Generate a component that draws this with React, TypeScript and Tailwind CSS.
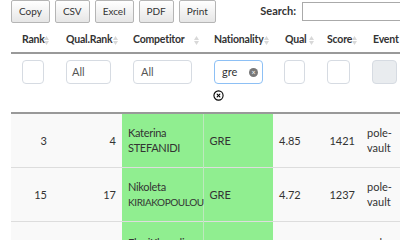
import { CircleX } from "lucide-react";

const buttons = ["Copy", "CSV", "Excel", "PDF", "Print"];

const columns = [
  { label: "Rank", w: "w-[42px]", pl: "pl-[11px]" },
  { label: "Qual.Rank", w: "w-[69px]", pl: "pl-[13px]" },
  { label: "Competitor", w: "w-[81px]", pl: "pl-[11px]" },
  { label: "Nationality", w: "w-[70px]", pl: "pl-[11px]" },
  { label: "Qual", w: "w-[45px]", pl: "pl-[12px]" },
  { label: "Score", w: "w-[43px]", pl: "pl-[9px]" },
  { label: "Event", w: "w-[100px]", pl: "pl-[12px]" },
];

const rows = [
  { rank: "3", qrank: "4", first: "Katerina", last: "STEFANIDI", nat: "GRE", qual: "4.85", score: "1421", h: "h-[54px]" },
  { rank: "15", qrank: "17", first: "Nikoleta", last: "KIRIAKOPOULOU", nat: "GRE", qual: "4.72", score: "1237", h: "h-[54px]" },
  { rank: "21", qrank: "24", first: "EleniKlaoudia", last: "POLAK", nat: "GRE", qual: "4.60", score: "1100", h: "h-[57px]" },
];

function SortArrows() {
  return (
    <span className="absolute right-[4px] top-1/2 -translate-y-1/2 flex flex-col gap-[1px] pt-[3px]">
      <svg width="5" height="4" viewBox="0 0 5 4"><path d="M2.5 0L5 4H0z" fill="#d8d8d8" /></svg>
      <svg width="5" height="4" viewBox="0 0 5 4"><path d="M0 0h5L2.5 4z" fill="#d8d8d8" /></svg>
    </span>
  );
}

export default function App() {
  return (
    <div className="w-[400px] h-[240px] overflow-hidden bg-white text-[#333] font-['Lato','Liberation_Sans',sans-serif]">
      <div className="flex items-start h-[25px] pl-[11px]">
        <div className="flex gap-[5px]">
          {buttons.map((b) => (
            <button
              key={b}
              className="h-[23px] px-[7px] text-[10px] border border-[#b5b5b5] rounded-[2px] bg-gradient-to-b from-white to-[#e6e6e6] text-[#333]"
            >
              {b}
            </button>
          ))}
        </div>
        <div className="ml-auto flex items-center gap-[6px] pt-[2px]">
          <span className="text-[11px] font-bold">Search:</span>
          <input className="w-[100px] h-[19px] border border-[#aaa] -mr-[2px]" />
        </div>
      </div>

      <div className="pl-[11px]">
        <table className="table-fixed border-collapse text-[11px] w-[450px]">
          <colgroup>
            {columns.map((c) => (
              <col key={c.label} className={c.w} />
            ))}
          </colgroup>
          <thead>
            <tr className="h-[28px] border-b-2 border-[#999]">
              {columns.map((c) => (
                <th key={c.label} className={`relative text-left font-bold text-[10.5px] tracking-[-0.2px] pt-[3px] whitespace-nowrap ${c.pl}`}>
                  {c.label}
                  {c.label !== "Event" && <SortArrows />}
                </th>
              ))}
            </tr>
            <tr className="h-[60px] border-b-2 border-[#999] align-top">
              <td className="pl-[11px] pt-[6px]">
                <div className="w-[22px] h-[24px] border border-[#d6dbe2] rounded-[4px]" />
              </td>
              <td className="pl-[13px] pt-[6px]">
                <div className="w-[45px] h-[24px] border border-[#d6dbe2] rounded-[4px] pl-[5px] flex items-center text-[#555]">All</div>
              </td>
              <td className="pl-[11px] pt-[6px]">
                <div className="w-[59px] h-[24px] border border-[#d6dbe2] rounded-[4px] pl-[7px] flex items-center text-[#555]">All</div>
              </td>
              <td className="pl-[11px] pt-[6px]">
                <div className="w-[49px] h-[24px] border border-[#8dc0f5] rounded-[4px] pl-[7px] pr-[4px] flex items-center justify-between text-[#333]">
                  gre
                  <span className="w-[9px] h-[9px] rounded-full bg-[#777] flex items-center justify-center text-white text-[7px] leading-none">×</span>
                </div>
                <CircleX size={11} strokeWidth={2.4} className="mt-[6px] ml-[-1px] text-black" />
              </td>
              <td className="pl-[11px] pt-[6px]">
                <div className="w-[21px] h-[24px] border border-[#d6dbe2] rounded-[4px]" />
              </td>
              <td className="pl-[9px] pt-[6px]">
                <div className="w-[23px] h-[24px] border border-[#d6dbe2] rounded-[4px]" />
              </td>
              <td className="pl-[11px] pt-[6px]">
                <div className="w-[25px] h-[24px] border border-[#d6dbe2] rounded-[4px] bg-[#e9ecef]" />
              </td>
            </tr>
          </thead>
          <tbody>
            {rows.map((r) => (
              <tr key={r.last} className={`${r.h} bg-[#f9f9f9] border-b border-[#ddd] leading-[15px]`}>
                <td className="text-right pr-[6px]">{r.rank}</td>
                <td className="text-right pr-[6px]">{r.qrank}</td>
                <td className="bg-[#90ee90] px-[6px] border-r border-[#bde9bd] whitespace-nowrap tracking-[-0.3px]">
                  {r.first}
                  <br />
                  <span className={r.last.length > 10 ? "text-[10px] tracking-[-0.4px]" : ""}>{r.last}</span>
                </td>
                <td className="bg-[#90ee90] px-[6px]">{r.nat}</td>
                <td className="px-[6px]">{r.qual}</td>
                <td className="text-right pr-[6px]">{r.score}</td>
                <td className="pl-[6px]">
                  pole-
                  <br />
                  vault
                </td>
              </tr>
            ))}
          </tbody>
        </table>
      </div>
    </div>
  );
}
